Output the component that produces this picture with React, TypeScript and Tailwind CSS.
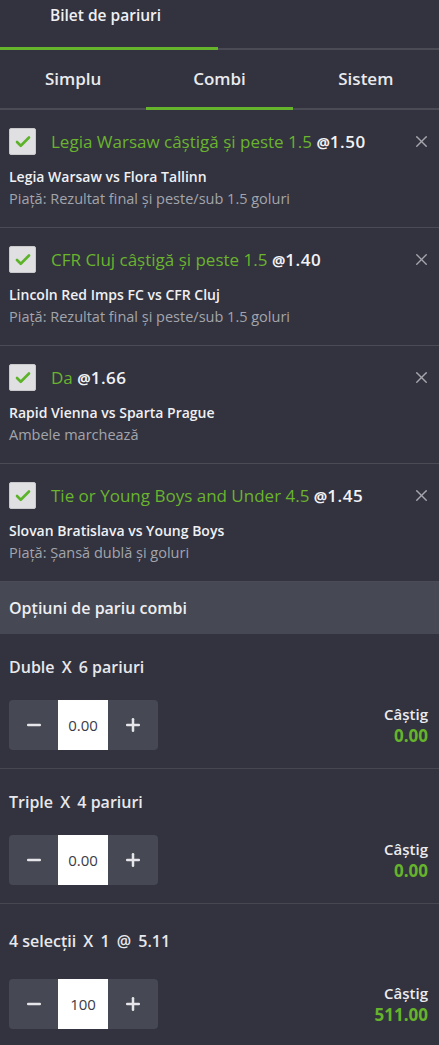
import { X, Check, Minus, Plus } from "lucide-react";

const selections = [
  { pick: "Legia Warsaw câștigă și peste 1.5", odd: "1.50", match: "Legia Warsaw vs Flora Tallinn", market: "Piață: Rezultat final și peste/sub 1.5 goluri" },
  { pick: "CFR Cluj câștigă și peste 1.5", odd: "1.40", match: "Lincoln Red Imps FC vs CFR Cluj", market: "Piață: Rezultat final și peste/sub 1.5 goluri" },
  { pick: "Da", odd: "1.66", match: "Rapid Vienna vs Sparta Prague", market: "Ambele marchează" },
  { pick: "Tie or Young Boys and Under 4.5", odd: "1.45", match: "Slovan Bratislava vs Young Boys", market: "Piață: Șansă dublă și goluri" },
];

function Stepper({ value }: { value: string }) {
  return (
    <div className="flex h-[50px] w-[149px] rounded-[4px] bg-[#464853] overflow-hidden">
      <button className="w-[49px] flex items-center justify-center text-[#e6e6ea]">
        <Minus size={20} strokeWidth={3} />
      </button>
      <div className="w-[50px] bg-white flex items-center justify-center text-[15px] text-[#3a3b48]">{value}</div>
      <button className="w-[50px] flex items-center justify-center text-[#e6e6ea]">
        <Plus size={20} strokeWidth={3} />
      </button>
    </div>
  );
}

function CombiRow({ title, value, win, last }: { title: React.ReactNode; value: string; win: string; last?: boolean }) {
  return (
    <div className={last ? "px-[9px] pt-[26px] pb-[18px]" : "px-[9px] pt-[22px] pb-[18px] border-b border-[#464751]"}>
      <div className="text-[16px] font-semibold text-[#e8e8ec] leading-[22px]">{title}</div>
      <div className={`${last ? "mt-[27px]" : "mt-[22px]"} flex items-center justify-between`}>
        <Stepper value={value} />
        <div className="text-right pr-[2px]">
          <div className="text-[15px] font-semibold text-[#ececf0] leading-[21px]">Câștig</div>
          <div className="text-[17px] font-bold text-[#66b32c] leading-[21px]">{win}</div>
        </div>
      </div>
    </div>
  );
}

export default function App() {
  return (
    <div className="w-[439px] h-[1045px] overflow-hidden bg-[#32333e] text-white" style={{ fontFamily: "'Open Sans', Roboto, sans-serif" }}>
      {/* top header */}
      <div className="h-[47px] pl-[50px] pt-[4px] text-[15.5px] font-semibold text-[#f0f0f4]">Bilet de pariuri</div>
      <div className="flex h-[3px]">
        <div className="w-[218px] bg-[#66b32c]" />
        <div className="flex-1 h-[2px] mt-[0.5px] bg-[#4a4b55]" />
      </div>

      {/* tabs */}
      <div className="grid grid-cols-3 h-[60px] border-b-2 border-[#4a4b55]">
        {["Simplu", "Combi", "Sistem"].map((t) => (
          <div key={t} className={`flex items-center justify-center text-[17px] font-semibold text-[#eaeaee] ${t === "Combi" ? "relative" : ""}`}>
            {t}
            {t === "Combi" && <div className="absolute left-0 right-0 -bottom-[2px] h-[3px] bg-[#66b32c]" />}
          </div>
        ))}
      </div>

      {/* selections */}
      {selections.map((s) => (
        <div key={s.pick} className="h-[118px] border-b border-[#4a4b55] px-[9px] pt-[18px]">
          <div className="flex items-center">
            <div className="w-[27px] h-[27px] rounded-[2px] bg-[#e0e0e2] border border-[#c9c9cc] flex items-center justify-center">
              <Check size={18} strokeWidth={3.5} className="text-[#5cb32a]" />
            </div>
            <div className="ml-[15px] flex-1 text-[17px] leading-6">
              <span className="text-[#6ab42e]">{s.pick}</span>{" "}
              <span className="text-[15px] font-bold text-[#f2f2f6]">@</span>
              <span className="font-semibold text-[#f2f2f6] tracking-[0.5px]">{s.odd}</span>
            </div>
            <X size={19} strokeWidth={1.75} className="text-[#a5a6ad] -mr-[1px]" />
          </div>
          <div className="mt-[12px] text-[14px] font-semibold text-[#f0f0f4] leading-5">{s.match}</div>
          <div className="mt-[2px] text-[14.5px] text-[#a4a5ac] leading-5">{s.market}</div>
        </div>
      ))}

      {/* combi options */}
      <div className="h-[52px] bg-[#464853] px-[9px] flex items-center text-[16px] font-semibold text-[#eeeef2]">Opțiuni de pariu combi</div>

      <CombiRow title={<>Duble <span className="mx-[3px]">X</span> 6 pariuri</>} value="0.00" win="0.00" />
      <CombiRow title={<>Triple <span className="mx-[3px]">X</span> 4 pariuri</>} value="0.00" win="0.00" />
      <CombiRow title={<>4 selecții <span className="mx-[3px]">X</span> 1 <span className="mx-[3px]">@</span> 5.11</>} value="100" win="511.00" last />
    </div>
  );
}
